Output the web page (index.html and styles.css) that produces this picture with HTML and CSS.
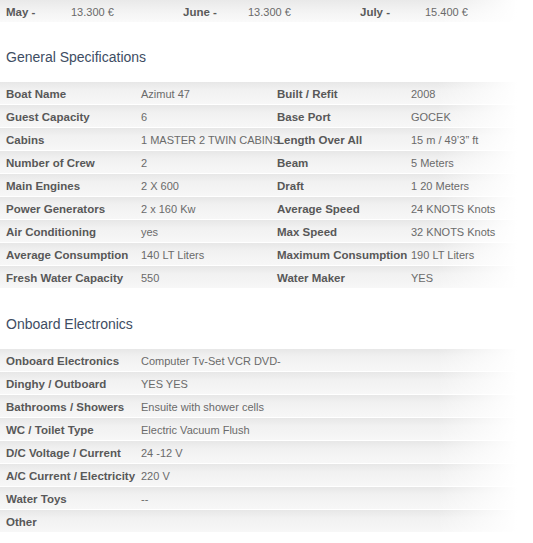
FILE: index.html
```html
<!DOCTYPE html>
<html>
<head>
<meta charset="utf-8">
<link rel="stylesheet" href="styles.css">
</head>
<body>
<div class="prices">
  <div class="price"><span class="plabel">May -</span><span class="pval">13.300 €</span></div>
  <div class="price"><span class="plabel">June -</span><span class="pval">13.300 €</span></div>
  <div class="price"><span class="plabel">July -</span><span class="pval">15.400 €</span></div>
</div>

<h2 class="heading">General Specifications</h2>
<div class="specs">
  <div class="row"><span class="lbl">Boat Name</span><span class="val">Azimut 47</span><span class="lbl">Built / Refit</span><span class="val">2008</span></div>
  <div class="row"><span class="lbl">Guest Capacity</span><span class="val">6</span><span class="lbl">Base Port</span><span class="val">GOCEK</span></div>
  <div class="row"><span class="lbl">Cabins</span><span class="val">1 MASTER 2 TWIN CABINS</span><span class="lbl">Length Over All</span><span class="val">15 m / 49’3” ft</span></div>
  <div class="row"><span class="lbl">Number of Crew</span><span class="val">2</span><span class="lbl">Beam</span><span class="val">5 Meters</span></div>
  <div class="row"><span class="lbl">Main Engines</span><span class="val">2 X 600</span><span class="lbl">Draft</span><span class="val">1 20 Meters</span></div>
  <div class="row"><span class="lbl">Power Generators</span><span class="val">2 x 160 Kw</span><span class="lbl">Average Speed</span><span class="val">24 KNOTS Knots</span></div>
  <div class="row"><span class="lbl">Air Conditioning</span><span class="val">yes</span><span class="lbl">Max Speed</span><span class="val">32 KNOTS Knots</span></div>
  <div class="row"><span class="lbl">Average Consumption</span><span class="val">140 LT Liters</span><span class="lbl">Maximum Consumption</span><span class="val">190 LT Liters</span></div>
  <div class="row"><span class="lbl">Fresh Water Capacity</span><span class="val">550</span><span class="lbl">Water Maker</span><span class="val">YES</span></div>
</div>

<h2 class="heading">Onboard Electronics</h2>
<div class="specs">
  <div class="row"><span class="lbl">Onboard Electronics</span><span class="val">Computer Tv-Set VCR DVD-</span></div>
  <div class="row"><span class="lbl">Dinghy / Outboard</span><span class="val">YES YES</span></div>
  <div class="row"><span class="lbl">Bathrooms / Showers</span><span class="val">Ensuite with shower cells</span></div>
  <div class="row"><span class="lbl">WC / Toilet Type</span><span class="val">Electric Vacuum Flush</span></div>
  <div class="row"><span class="lbl">D/C Voltage / Current</span><span class="val">24 -12 V</span></div>
  <div class="row"><span class="lbl">A/C Current / Electricity</span><span class="val">220 V</span></div>
  <div class="row"><span class="lbl">Water Toys</span><span class="val">--</span></div>
  <div class="row"><span class="lbl">Other</span><span class="val"></span></div>
</div>
</body>
</html>
```

FILE: styles.css
```css
html, body {
  margin: 0;
  padding: 0;
  background: #fff;
}
body {
  font-family: "Liberation Sans", Arial, sans-serif;
  font-size: 11px;
  color: #666;
}
.prices {
  display: flex;
  height: 22px;
  padding-top: 1px;
  box-sizing: border-box;
  align-items: center;
  background:
    linear-gradient(to right, rgba(255,255,255,0) 82%, #fff 97%),
    linear-gradient(to bottom, #e9e9e9 0%, #f3f3f3 50%, #fafafa 100%);
}
.price {
  width: 177px;
  display: flex;
}
.plabel {
  width: 71px;
  padding-left: 6px;
  box-sizing: border-box;
  font-weight: bold;
  color: #5a5a5a;
  font-size: 11.5px;
}
.pval {
  color: #6a6a6a;
}
.heading {
  margin: 25px 0 15px;
  padding-left: 6px;
  height: 20px;
  line-height: 20px;
  font-size: 14px;
  font-weight: normal;
  color: #3e4d63;
}
.specs {
  display: flex;
  flex-direction: column;
}
.row {
  display: grid;
  grid-template-columns: 135px 136px 134px 1fr;
  height: 23px;
  padding-top: 2px;
  box-sizing: border-box;
  align-items: center;
  border-bottom: 1px solid #fff;
  background:
    linear-gradient(to right, rgba(255,255,255,0) 82%, #fff 97%),
    linear-gradient(to bottom, #e7e7e7 0%, #f1f1f1 35%, #f7f7f7 100%);
}
.lbl {
  padding-left: 6px;
  font-weight: bold;
  font-size: 11.5px;
  color: #585858;
  white-space: nowrap;
}
.val {
  padding-left: 6px;
  color: #6a6a6a;
  white-space: nowrap;
}
```
